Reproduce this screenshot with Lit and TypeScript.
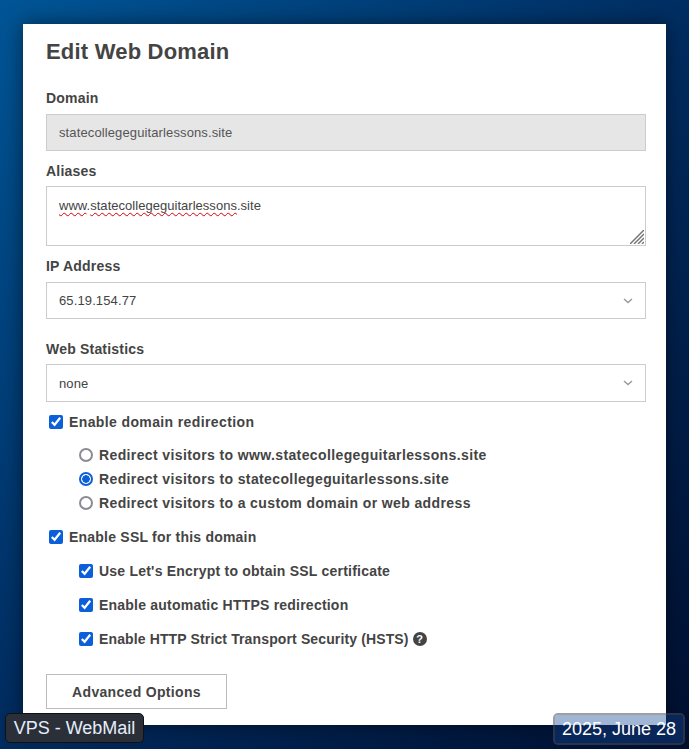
import { LitElement, html, css, svg } from "lit";
import { customElement } from "lit/decorators.js";

const chevron = html`<svg class="chev" width="10" height="6" viewBox="0 0 10 6"><path d="M1 1l4 3.6L9 1" fill="none" stroke="#999" stroke-width="1.4"/></svg>`;
const grip = svg`<path d="M14 0L0 14M14 4L4 14M14 8L8 14M14 12L12 14" stroke="#777" stroke-width="1.5" fill="none"/>`;

@customElement("app-root")
export class AppRoot extends LitElement {
  static styles = css`
    :host {
      display: block;
      position: relative;
      width: 689px;
      height: 749px;
      overflow: hidden;
      box-sizing: border-box;
      padding: 24px 23px;
      background: linear-gradient(135deg, #005596 0%, #002c60 50%, #000f30 100%);
      font-family: "Liberation Sans", Arial, sans-serif;
      color: #444;
    }
    .card {
      background: #fff;
      height: 701px;
      box-sizing: border-box;
      padding: 15px 20px 0 23px;
      box-shadow: 0 0 18px rgba(0, 0, 0, 0.5);
      display: flex;
      flex-direction: column;
    }
    h1 {
      margin: 0 0 25px;
      font-size: 22px;
      line-height: 26px;
      font-weight: 700;
      letter-spacing: 0.2px;
      color: #444;
    }
    .label {
      font-size: 14px;
      font-weight: 700;
      line-height: 16px;
      letter-spacing: 0.2px;
      margin-bottom: 8px;
    }
    .label.close { margin-bottom: 7px; }
    .field {
      box-sizing: border-box;
      width: 600px;
      border: 1px solid #ccc;
      padding: 0 12px;
      font-size: 13px;
      letter-spacing: 0.12px;
      color: #444;
      display: flex;
      align-items: center;
      justify-content: space-between;
    }
    .domain { height: 37px; background: #e6e6e6; color: #555; margin-bottom: 12px; }
    .aliases {
      height: 60px;
      position: relative;
      padding-top: 11px;
      margin-bottom: 12px;
      display: block;
      line-height: 15px;
      letter-spacing: 0.03px;
    }
    .sq {
      text-decoration: underline wavy #d8000c 1.4px;
      text-decoration-skip-ink: none;
      text-underline-offset: 2px;
    }
    .grip { position: absolute; right: 1px; bottom: 1px; width: 14px; height: 14px; }
    .ip { height: 37px; margin-bottom: 22px; }
    .stats { height: 38px; margin-bottom: 12px; }
    .row {
      display: flex;
      align-items: center;
      gap: 6px;
      font-size: 14px;
      font-weight: 700;
      letter-spacing: 0.22px;
      line-height: 16px;
      height: 16px;
      color: #444;
    }
    .row.top { margin-left: 3px; }
    .row.sub { margin-left: 33px; }
    .row.wide { letter-spacing: 0.38px; }
    .row.tight { letter-spacing: 0.13px; }
    input { margin: 0; width: 14px; height: 14px; accent-color: #0b5fd9; flex: none; }
    input[type="radio"] {
      appearance: none;
      box-sizing: border-box;
      border: 2px solid #8b8b96;
      border-radius: 50%;
      background: #fff;
    }
    input[type="radio"]:checked {
      border-color: #0b5fd9;
      background: radial-gradient(circle, #0b5fd9 0 3.5px, #fff 4px);
    }
    .radios { display: flex; flex-direction: column; gap: 8px; margin: 17px 0 18px; }
    .checks { display: flex; flex-direction: column; gap: 18px; margin: 18px 0 27px; }
    .help {
      width: 14px; height: 14px; border-radius: 50%;
      background: #444; color: #fff;
      font-size: 11px; line-height: 14px; text-align: center;
      margin-left: -2px; letter-spacing: 0;
    }
    button {
      width: 181px;
      height: 35px;
      box-sizing: border-box;
      background: #fff;
      border: 1px solid #bbb;
      font: 700 14px "Liberation Sans", Arial, sans-serif;
      letter-spacing: 0.32px;
      color: #444;
      padding: 0;
    }
    .tip {
      position: absolute;
      box-sizing: border-box;
      font-size: 18px;
      text-align: center;
      border-radius: 5px;
    }
    .mail {
      left: 5px; top: 713px; width: 139px; height: 30px;
      line-height: 28px;
      background: #2b2f38;
      border: 1px solid #111;
      color: #e4eefa;
    }
    .date {
      left: 553px; top: 713px; width: 132px; height: 32px;
      background: rgba(20, 72, 150, 0.4);
      background-clip: padding-box;
      border: 2px solid rgba(80, 80, 85, 0.55);
      line-height: 28px;
      color: #fff;
    }
  `;

  render() {
    return html`
      <div class="card">
        <h1>Edit Web Domain</h1>
        <div class="label">Domain</div>
        <div class="field domain">statecollegeguitarlessons.site</div>
        <div class="label close">Aliases</div>
        <div class="field aliases"><span class="sq">www</span>.<span class="sq">statecollegeguitarlessons</span>.site
          <svg class="grip" viewBox="0 0 14 14">${grip}</svg>
        </div>
        <div class="label">IP Address</div>
        <div class="field ip">65.19.154.77 ${chevron}</div>
        <div class="label close">Web Statistics</div>
        <div class="field stats">none ${chevron}</div>
        <label class="row top wide"><input type="checkbox" checked />Enable domain redirection</label>
        <div class="radios">
          <label class="row sub wide"><input type="radio" name="r" />Redirect visitors to www.statecollegeguitarlessons.site</label>
          <label class="row sub wide"><input type="radio" name="r" checked />Redirect visitors to statecollegeguitarlessons.site</label>
          <label class="row sub wide"><input type="radio" name="r" />Redirect visitors to a custom domain or web address</label>
        </div>
        <label class="row top"><input type="checkbox" checked />Enable SSL for this domain</label>
        <div class="checks">
          <label class="row sub"><input type="checkbox" checked />Use Let's Encrypt to obtain SSL certificate</label>
          <label class="row sub"><input type="checkbox" checked />Enable automatic HTTPS redirection</label>
          <label class="row sub tight"><input type="checkbox" checked />Enable HTTP Strict Transport Security (HSTS) <span class="help">?</span></label>
        </div>
        <div><button>Advanced Options</button></div>
      </div>
      <div class="tip mail">VPS - WebMail</div>
      <div class="tip date">2025, June 28</div>
    `;
  }
}
